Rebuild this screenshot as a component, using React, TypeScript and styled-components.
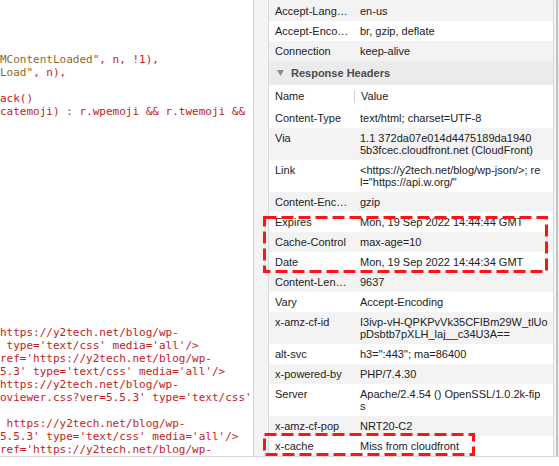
import React from 'react'
import styled, { createGlobalStyle } from 'styled-components'

const GlobalStyle = createGlobalStyle`
  html, body {
    margin: 0;
    padding: 0;
    background: #fff;
  }
  body {
    font-family: "Liberation Sans", Arial, sans-serif;
  }
`

const Screen = styled.div`
  width: 559px;
  height: 466px;
  overflow: hidden;
  display: flex;
  flex-direction: column;
  background: #fff;
`

const Main = styled.div`
  display: flex;
  height: 456px;
  border-bottom: 1px solid #d6d6d6;
`

const Footer = styled.div`
  flex: 1;
  background: #fff;
`

const CodePane = styled.div`
  width: 253px;
  flex: none;
  overflow: hidden;
  background: #fff;
  border-right: 1px solid #d6d6d6;
`

const Code = styled.div`
  padding-top: 1px;
  font-family: "DejaVu Sans Mono", "Liberation Mono", monospace;
  font-size: 11px;
  line-height: 13px;
  color: #c4221b;
  white-space: pre;
`

const CodeLine = styled.div`
  height: 13px;
`

const Str = styled.span`
  color: #8b6b2b;
`

const Inspector = styled.div`
  position: relative;
  flex: 1;
  display: flex;
  padding: 1px 2px 0 14px;
  background: #f4f4f4;
  border-right: 2px solid #c3c3c3;
  overflow: hidden;
`

const Edge = styled.div`
  width: 1px;
  flex: none;
  background: #efefef;
`

const Grid = styled.div`
  width: 284px;
  flex: none;
  align-self: flex-start;
  border-left: 1px solid #d9d9d9;
  border-right: 1px solid #d9d9d9;
  background: #fff;
  font-size: 11px;
  color: #222;
`

const Row = styled.div<{ $striped?: boolean }>`
  display: grid;
  grid-template-columns: 85px 1fr;
  background: ${p => (p.$striped ? '#f3f3f3' : '#fff')};
  line-height: 12px;
`

const Cell = styled.div`
  padding: 4px 6px;
  white-space: nowrap;
  overflow: hidden;
`

const Section = styled.div`
  height: 24px;
  display: flex;
  align-items: center;
  gap: 7px;
  padding-left: 8px;
  background: #ebebeb;
  font-weight: bold;
  color: #4b4b4b;
`

const Disclosure = styled.svg`
  width: 7px;
  height: 6px;
  fill: #8e8e8e;
`

const HeadRow = styled.div`
  display: grid;
  grid-template-columns: 85px 1fr;
  height: 23px;
  align-items: center;
  background: #fff;
`

const HeadCell = styled.div<{ $divider?: boolean }>`
  padding: 0 6px;
  line-height: 13px;
  border-left: ${p => (p.$divider ? '1px solid #d2d2d2' : 'none')};
`

const Annotation = styled.svg<{ $x: number; $y: number; $w: number; $h: number }>`
  position: absolute;
  left: ${p => p.$x}px;
  top: ${p => p.$y}px;
  width: ${p => p.$w}px;
  height: ${p => p.$h}px;
  pointer-events: none;
`

type Header = { name: string; value: string[] }

const requestHeaders: Header[] = [
  { name: 'Accept-Lang…', value: ['en-us'] },
  { name: 'Accept-Enco…', value: ['br, gzip, deflate'] },
  { name: 'Connection', value: ['keep-alive'] },
]

const responseHeaders: Header[] = [
  { name: 'Content-Type', value: ['text/html; charset=UTF-8'] },
  { name: 'Via', value: ['1.1 372da07e014d4475189da1940', '5b3fcec.cloudfront.net (CloudFront)'] },
  { name: 'Link', value: ['<https://y2tech.net/blog/wp-json/>; re', 'l="https://api.w.org/"'] },
  { name: 'Content-Enc…', value: ['gzip'] },
  { name: 'Expires', value: ['Mon, 19 Sep 2022 14:44:44 GMT'] },
  { name: 'Cache-Control', value: ['max-age=10'] },
  { name: 'Date', value: ['Mon, 19 Sep 2022 14:44:34 GMT'] },
  { name: 'Content-Len…', value: ['9637'] },
  { name: 'Vary', value: ['Accept-Encoding'] },
  { name: 'x-amz-cf-id', value: ['I3ivp-vH-QPKPvVk35CFIBm29W_tlUo', 'pDsbtb7pXLH_laj__c34U3A=='] },
  { name: 'alt-svc', value: ['h3=":443"; ma=86400'] },
  { name: 'x-powered-by', value: ['PHP/7.4.30'] },
  { name: 'Server', value: ['Apache/2.4.54 () OpenSSL/1.0.2k-fip', 's'] },
  { name: 'x-amz-cf-pop', value: ['NRT20-C2'] },
  { name: 'x-cache', value: ['Miss from cloudfront'] },
]

const codeLines: React.ReactNode[] = [
  '', '', '', '',
  <><Str>MContentLoaded"</Str>, n, !1),</>,
  <><Str>Load"</Str>, n),</>,
  '',
  'ack()',
  'catemoji) : r.wpemoji && r.twemoji &&',
  '', '', '', '', '', '', '', '', '', '', '', '', '', '', '', '',
  "https://y2tech.net/blog/wp-",
  " type='text/css' media='all'/>",
  "ref='https://y2tech.net/blog/wp-",
  "5.3' type='text/css' media='all'/>",
  "https://y2tech.net/blog/wp-",
  "oviewer.css?ver=5.5.3' type='text/css'",
  '',
  " https://y2tech.net/blog/wp-",
  "5.5.3' type='text/css' media='all'/>",
  "ref='https://y2tech.net/blog/wp-",
]

const HeaderRow = ({ header, striped }: { header: Header; striped: boolean }) => (
  <Row $striped={striped}>
    <Cell>{header.name}</Cell>
    <Cell>
      {header.value.map((line, i) => (
        <div key={i}>{line}</div>
      ))}
    </Cell>
  </Row>
)

const DashedBox = ({ x, y, w, h }: { x: number; y: number; w: number; h: number }) => (
  <Annotation $x={x} $y={y} $w={w} $h={h} viewBox={`0 0 ${w} ${h}`}>
    <rect
      x={1.5}
      y={1.5}
      width={w - 3}
      height={h - 3}
      fill="none"
      stroke="#ff1414"
      strokeWidth={3}
      strokeDasharray="12 5"
    />
  </Annotation>
)

export default function App() {
  return (
    <Screen>
      <GlobalStyle />
      <Main>
        <CodePane>
          <Code>
            {codeLines.map((line, i) => (
              <CodeLine key={i}>{line}</CodeLine>
            ))}
          </Code>
        </CodePane>
        <Inspector>
          <Grid>
            {requestHeaders.map((h, i) => (
              <HeaderRow key={h.name} header={h} striped={i % 2 === 0} />
            ))}
            <Section>
              <Disclosure viewBox="0 0 7 6">
                <path d="M0 0 H7 L3.5 6 Z" />
              </Disclosure>
              Response Headers
            </Section>
            <HeadRow>
              <HeadCell>Name</HeadCell>
              <HeadCell $divider>Value</HeadCell>
            </HeadRow>
            {responseHeaders.map((h, i) => (
              <HeaderRow key={h.name} header={h} striped={i % 2 === 1} />
            ))}
          </Grid>
          <DashedBox x={9} y={216} w={285} h={57} />
          <DashedBox x={9} y={433} w={212} h={23} />
        </Inspector>
        <Edge />
      </Main>
      <Footer />
    </Screen>
  )
}
